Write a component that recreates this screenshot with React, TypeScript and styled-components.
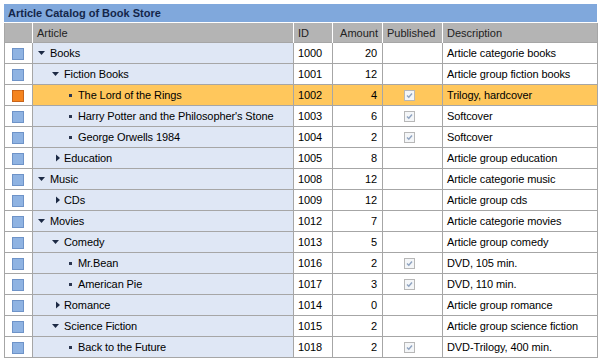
import React from "react";
import styled, { createGlobalStyle } from "styled-components";

type Item = {
  name: string;
  level: number;
  kind: "open" | "closed" | "leaf";
  id: number;
  amount: number;
  published?: boolean;
  description: string;
  selected?: boolean;
};

const items: Item[] = [
  { name: "Books", level: 0, kind: "open", id: 1000, amount: 20, description: "Article categorie books" },
  { name: "Fiction Books", level: 1, kind: "open", id: 1001, amount: 12, description: "Article group fiction books" },
  { name: "The Lord of the Rings", level: 2, kind: "leaf", id: 1002, amount: 4, published: true, description: "Trilogy, hardcover", selected: true },
  { name: "Harry Potter and the Philosopher's Stone", level: 2, kind: "leaf", id: 1003, amount: 6, published: true, description: "Softcover" },
  { name: "George Orwells 1984", level: 2, kind: "leaf", id: 1004, amount: 2, published: true, description: "Softcover" },
  { name: "Education", level: 1, kind: "closed", id: 1005, amount: 8, description: "Article group education" },
  { name: "Music", level: 0, kind: "open", id: 1008, amount: 12, description: "Article categorie music" },
  { name: "CDs", level: 1, kind: "closed", id: 1009, amount: 12, description: "Article group cds" },
  { name: "Movies", level: 0, kind: "open", id: 1012, amount: 7, description: "Article categorie movies" },
  { name: "Comedy", level: 1, kind: "open", id: 1013, amount: 5, description: "Article group comedy" },
  { name: "Mr.Bean", level: 2, kind: "leaf", id: 1016, amount: 2, published: true, description: "DVD, 105 min." },
  { name: "American Pie", level: 2, kind: "leaf", id: 1017, amount: 3, published: true, description: "DVD, 110 min." },
  { name: "Romance", level: 1, kind: "closed", id: 1014, amount: 0, description: "Article group romance" },
  { name: "Science Fiction", level: 1, kind: "open", id: 1015, amount: 2, description: "Article group science fiction" },
  { name: "Back to the Future", level: 2, kind: "leaf", id: 1018, amount: 2, published: true, description: "DVD-Trilogy, 400 min." },
];

const GlobalStyle = createGlobalStyle`
  body {
    margin: 0;
    background: #ffffff;
    font-family: "Liberation Sans", Arial, sans-serif;
    font-size: 11px;
    color: #000;
  }
`;

const Panel = styled.div`
  width: 593px;
  margin: 4px 4px 0 4px;
`;

const TitleBar = styled.div`
  height: 18px;
  line-height: 18px;
  padding-left: 4px;
  background: #80a8dc;
  color: #14264a;
  font-weight: bold;
  font-size: 11px;
  border-bottom: 1px solid #ffffff;
`;

const Grid = styled.table`
  width: 593px;
  border-collapse: collapse;
  table-layout: fixed;
`;

const HeadCell = styled.th<{ $align?: "left" | "right" }>`
  height: 19px;
  padding: 0 4px;
  background: #b4b4b4;
  color: #222;
  font-weight: normal;
  text-align: ${(p) => p.$align ?? "left"};
  border-left: 1px solid #ffffff;
  &:first-child {
    border-left: 1px solid #a6a6a6;
  }
  &:last-child {
    border-right: 1px solid #a6a6a6;
  }
`;

const Row = styled.tr<{ $selected?: boolean }>`
  & > td {
    background: ${(p) => (p.$selected ? "#ffc75c" : "#ffffff")};
  }
  & > td.tree {
    background: ${(p) => (p.$selected ? "#ffc75c" : "#dfe7f5")};
  }
  & > td.sel {
    background: #ffffff;
  }
`;

const Cell = styled.td<{ $align?: "left" | "right" }>`
  height: 20px;
  padding: 0 5px 0 4px;
  border: 1px solid #a6a6a6;
  text-align: ${(p) => p.$align ?? "left"};
  white-space: nowrap;
  overflow: hidden;
  letter-spacing: -0.1px;
`;

const SelectorCell = styled(Cell)`
  padding: 0;
  text-align: center;
`;

const RowMarker = styled.span<{ $selected?: boolean }>`
  display: inline-block;
  vertical-align: middle;
  width: 10px;
  height: 10px;
  margin-left: -1px;
  background: ${(p) => (p.$selected ? "#f5841f" : "#8fb3e2")};
  border: 1px solid ${(p) => (p.$selected ? "#c8641a" : "#6e93c8")};
`;

const TreeLabel = styled.div<{ $level: number }>`
  display: flex;
  align-items: center;
  padding-left: ${(p) => p.$level * 14}px;
  gap: 1px;
`;

const Toggle = styled.span`
  display: inline-flex;
  width: 12px;
  height: 12px;
  flex: none;
`;

const PublishedCell = styled(Cell)`
  padding: 0 0 0 21px;
  line-height: 0;
`;

const CheckBox = styled.span`
  display: inline-block;
  width: 11px;
  height: 11px;
  box-sizing: border-box;
  border: 1px solid #b7b7b7;
  background: #f4f6f8;
`;

const TreeIcon = ({ kind }: { kind: Item["kind"] }) => (
  <Toggle>
    <svg width="12" height="12" viewBox="0 0 12 12">
      {kind === "open" && <polygon points="1,4 8,4 4.5,8" fill="#1c2a44" />}
      {kind === "closed" && <polygon points="5,2.5 9,6 5,9.5" fill="#1c2a44" />}
      {kind === "leaf" && <rect x="4" y="5" width="3" height="3" fill="#2a3550" />}
    </svg>
  </Toggle>
);

const Check = () => (
  <CheckBox>
    <svg width="9" height="9" viewBox="0 0 9 9">
      <polyline points="2,4.5 3.8,6.3 7,2.5" fill="none" stroke="#8fa3c0" strokeWidth="1.4" />
    </svg>
  </CheckBox>
);

export default function App() {
  return (
    <>
      <GlobalStyle />
      <Panel>
        <TitleBar>Article Catalog of Book Store</TitleBar>
        <Grid>
          <colgroup>
            <col style={{ width: 28 }} />
            <col style={{ width: 261 }} />
            <col style={{ width: 39 }} />
            <col style={{ width: 50 }} />
            <col style={{ width: 60 }} />
            <col style={{ width: 155 }} />
          </colgroup>
          <thead>
            <tr>
              <HeadCell />
              <HeadCell>Article</HeadCell>
              <HeadCell>ID</HeadCell>
              <HeadCell $align="right">Amount</HeadCell>
              <HeadCell>Published</HeadCell>
              <HeadCell>Description</HeadCell>
            </tr>
          </thead>
          <tbody>
            {items.map((it) => (
              <Row key={it.id} $selected={it.selected}>
                <SelectorCell className="sel">
                  <RowMarker $selected={it.selected} />
                </SelectorCell>
                <Cell className="tree">
                  <TreeLabel $level={it.level}>
                    <TreeIcon kind={it.kind} />
                    <span>{it.name}</span>
                  </TreeLabel>
                </Cell>
                <Cell>{it.id}</Cell>
                <Cell $align="right">{it.amount}</Cell>
                <PublishedCell>{it.published && <Check />}</PublishedCell>
                <Cell>{it.description}</Cell>
              </Row>
            ))}
          </tbody>
        </Grid>
      </Panel>
    </>
  );
}
